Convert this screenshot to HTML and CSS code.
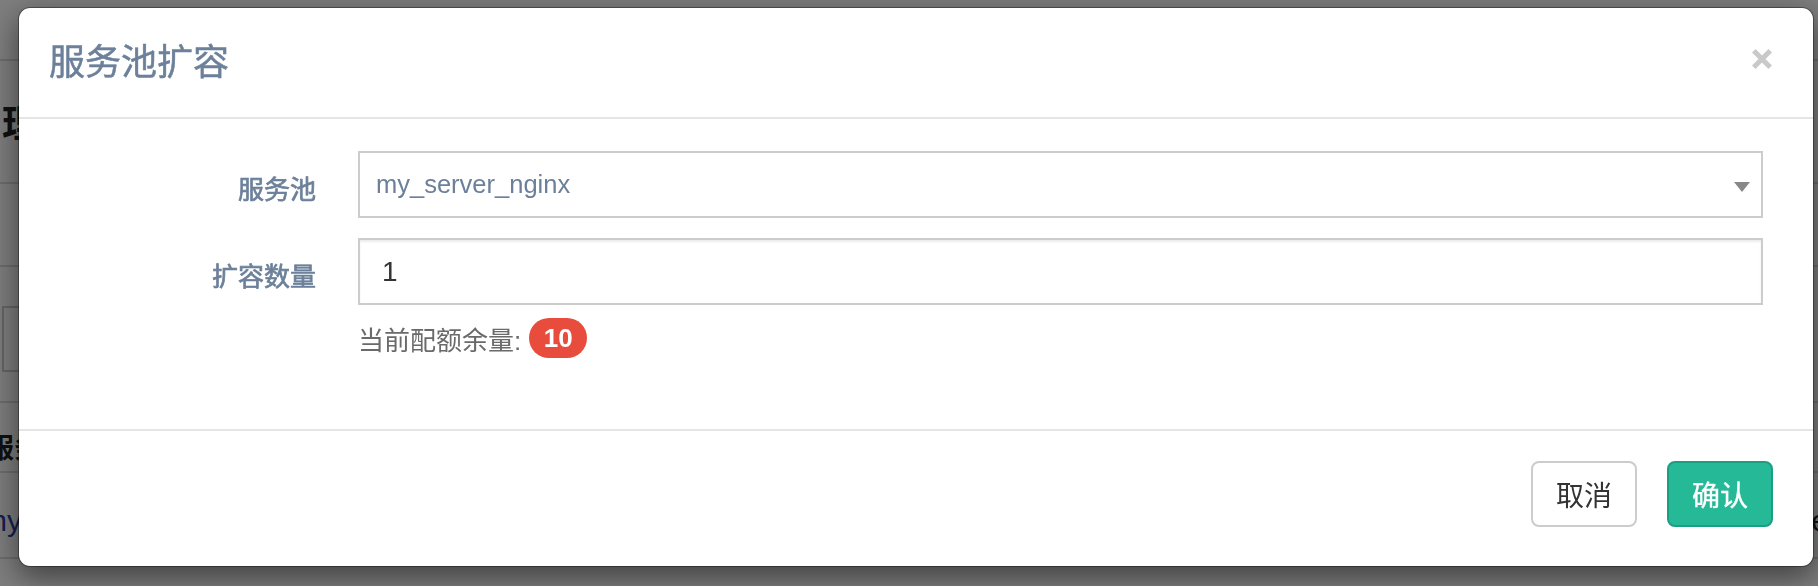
FILE: index.html
```html
<!DOCTYPE html>
<html lang="zh-CN">
<head>
<meta charset="utf-8">
<title>服务池扩容</title>
<link rel="stylesheet" href="styles.css">
</head>
<body>
<div class="page">
  <div class="page-top"></div>
  <div class="page-title"><span>理</span></div>
  <div class="page-row"></div>
  <div class="page-filter"><div class="page-input"></div></div>
  <div class="page-thead"><span>服务</span></div>
  <div class="page-trow"><a class="page-link">my</a><span class="page-tail">e</span></div>
  <div class="page-rest"></div>
</div>
<div class="backdrop"></div>
<div class="modal">
  <div class="modal-header">
    <h4 class="modal-title">服务池扩容</h4>
    <button class="close" type="button" aria-label="关闭">
      <svg width="20" height="20" viewBox="0 0 20 20"><path d="M1.8 1.8L18.2 18.2M18.2 1.8L1.8 18.2" stroke="#c9c9c9" stroke-width="5" fill="none"/></svg>
    </button>
  </div>
  <div class="modal-body">
    <div class="form-row">
      <label class="control-label">服务池</label>
      <div class="select">
        <span>my_server_nginx</span>
        <svg class="caret" width="16" height="10" viewBox="0 0 16 10"><path d="M0 0H16L8 10Z" fill="#888"/></svg>
      </div>
    </div>
    <div class="form-row second">
      <label class="control-label">扩容数量</label>
      <div class="input">1</div>
    </div>
    <div class="help-row">当前配额余量:<span class="badge">10</span></div>
  </div>
  <div class="modal-footer">
    <button class="btn" type="button">取消</button>
    <button class="btn btn-primary" type="button">确认</button>
  </div>
</div>
</body>
</html>
```
FILE: styles.css
```css
html, body {
  margin: 0;
  padding: 0;
  background: #fff;
  overflow: hidden;
}
body {
  width: 1818px;
  height: 586px;
  font-family: "Liberation Sans", "Noto Sans CJK SC", sans-serif;
  color: #333;
}
.page {
  width: 1818px;
}
.page-top {
  height: 59px;
  border-bottom: 2px solid #dcdcdc;
}
.page-title {
  height: 121px;
  border-bottom: 2px solid #dcdcdc;
  font-size: 38px;
  font-weight: 700;
  line-height: 126px;
  padding-left: 2px;
  color: #222;
}
.page-row {
  height: 81px;
  border-bottom: 2px solid #dcdcdc;
}
.page-filter {
  height: 136px;
  border-bottom: 2px solid #dcdcdc;
  padding-top: 39px;
  box-sizing: border-box;
}
.page-input {
  margin-left: 2px;
  width: 200px;
  height: 66px;
  border: 2px solid #ccc;
  box-sizing: border-box;
}
.page-thead {
  height: 68px;
  border-bottom: 2px solid #dcdcdc;
  font-size: 27px;
  font-weight: 700;
  line-height: 92px;
  margin-left: -13px;
  color: #222;
  overflow: hidden;
}
.page-trow {
  height: 84px;
  border-bottom: 2px solid #dcdcdc;
  font-size: 30px;
  line-height: 96px;
  display: flex;
  justify-content: space-between;
  overflow: hidden;
}
.page-link {
  color: #2d3fa8;
  margin-left: -18px;
}
.page-tail {
  margin-right: -10px;
  color: #222;
}
.page-rest {
  height: 25px;
}
.backdrop {
  position: fixed;
  inset: 0;
  background: rgba(0, 0, 0, 0.51);
}
.modal {
  position: fixed;
  left: 18px;
  top: 7px;
  width: 1796px;
  box-sizing: border-box;
  background: #fff;
  border: 1px solid rgba(0, 0, 0, 0.35);
  border-radius: 12px;
  background-clip: padding-box;
  box-shadow: 0 10px 30px rgba(0, 0, 0, 0.5);
}
.modal-header {
  display: flex;
  justify-content: space-between;
  align-items: flex-start;
  padding: 30px 41px 30px 30px;
  border-bottom: 2px solid #e5e5e5;
}
.modal-title {
  margin: 0;
  font-size: 36px;
  line-height: 49px;
  font-weight: 400;
  color: #6c809a;
  -webkit-text-stroke: 0.5px #6c809a;
}
.close {
  margin: 11px 0 0 0;
  padding: 0;
  border: 0;
  background: transparent;
  width: 20px;
  height: 20px;
  display: block;
}
.close svg {
  display: block;
}
.modal-body {
  padding: 32px 50px 71px 30px;
}
.form-row {
  display: grid;
  grid-template-columns: 267px 1fr;
  column-gap: 42px;
  align-items: center;
}
.form-row.second {
  margin-top: 20px;
}
.control-label {
  text-align: right;
  font-size: 26px;
  font-weight: 400;
  color: #6c809a;
  -webkit-text-stroke: 0.7px #6c809a;
  padding-top: 5px;
}
.select {
  height: 67px;
  box-sizing: border-box;
  border: 2px solid #ccc;
  display: flex;
  align-items: center;
  justify-content: space-between;
  padding: 0 11px 0 16px;
  font-size: 25.5px;
  color: #6c809a;
}
.caret {
  display: block;
  margin-top: 4px;
}
.input {
  height: 67px;
  box-sizing: border-box;
  border: 2px solid #ccc;
  box-shadow: inset 0 2px 2px rgba(0, 0, 0, 0.075);
  display: flex;
  align-items: center;
  padding-left: 22px;
  font-size: 28px;
  color: #333;
}
.help-row {
  margin-top: 13px;
  margin-left: 309px;
  height: 40px;
  display: flex;
  align-items: center;
  font-size: 26px;
  color: #6a6a6a;
}
.badge {
  margin-left: 8px;
  width: 58px;
  height: 40px;
  border-radius: 20px;
  background: #e74c3c;
  color: #fff;
  font-weight: 700;
  font-size: 26px;
  display: flex;
  align-items: center;
  justify-content: center;
}
.modal-footer {
  border-top: 2px solid #e5e5e5;
  padding: 30px 40px 39px;
  display: flex;
  justify-content: flex-end;
  gap: 30px;
}
.btn {
  width: 106px;
  height: 66px;
  box-sizing: border-box;
  border: 2px solid #ccc;
  border-radius: 8px;
  background: #fff;
  color: #333;
  font-family: "Liberation Sans", "Noto Sans CJK SC", sans-serif;
  font-size: 28px;
  padding: 0;
  display: flex;
  align-items: center;
  justify-content: center;
}
.btn-primary {
  background: #26b997;
  border-color: #1b9f81;
  color: #fff;
  -webkit-text-stroke: 0.4px #fff;
}
```
